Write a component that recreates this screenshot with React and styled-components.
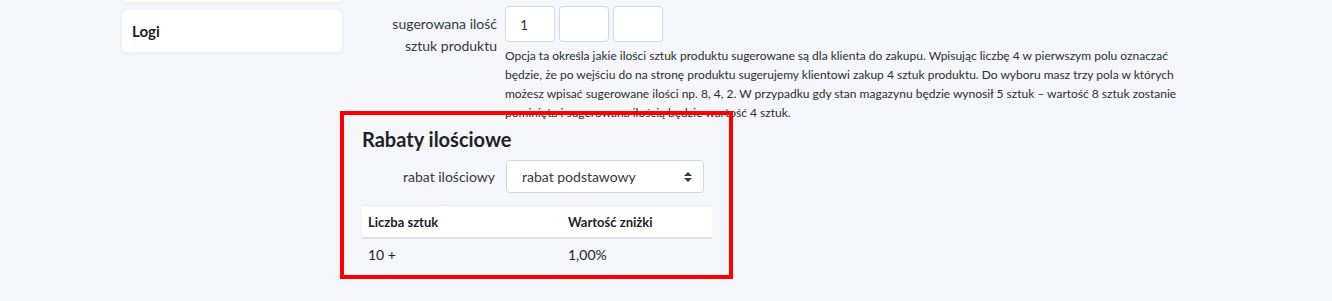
import styled, {createGlobalStyle} from "styled-components";

const GlobalStyle = createGlobalStyle`
    html, body {
        min-height: 100%;
    }
    body {
        margin: 0;
        background: #f4f6f9;
        font-family: "Lato", "Noto Sans", sans-serif;
        color: #212529;
    }
`

export default function App() {
    return (
        <>
            <GlobalStyle />
            <Layout>
                <Sidebar>
                    <Card />
                    <Card>Logi</Card>
                </Sidebar>
                <Main>
                    <FieldRow>
                        <Label>sugerowana ilość<br />sztuk produktu</Label>
                        <div>
                            <Inputs>
                                <SmallInput defaultValue="1" />
                                <SmallInput />
                                <SmallInput />
                            </Inputs>
                            <Hint>
                                Opcja ta określa jakie ilości sztuk produktu sugerowane są dla klienta do zakupu. Wpisując liczbę 4 w pierwszym polu oznaczać
                                będzie, że po wejściu do na stronę produktu sugerujemy klientowi zakup 4 sztuk produktu. Do wyboru masz trzy pola w których
                                możesz wpisać sugerowane ilości np. 8, 4, 2. W przypadku gdy stan magazynu będzie wynosił 5 sztuk – wartość 8 sztuk zostanie
                                pominięta i sugerowana ilością będzie wartość 4 sztuk.
                            </Hint>
                        </div>
                    </FieldRow>
                    <Section>
                        <Heading>Rabaty ilościowe</Heading>
                        <SelectRow>
                            <SelectLabel>rabat ilościowy</SelectLabel>
                            <Select>
                                rabat podstawowy
                                <svg width="10" height="12" viewBox="0 0 10 12">
                                    <path d="M5 1 L9 5 H1 Z M5 11 L9 7 H1 Z" fill="#343a40" />
                                </svg>
                            </Select>
                        </SelectRow>
                        <Table>
                            <colgroup>
                                <col width="200" />
                                <col width="150" />
                            </colgroup>
                            <thead>
                                <tr>
                                    <Th>Liczba sztuk</Th>
                                    <Th>Wartość zniżki</Th>
                                </tr>
                            </thead>
                            <tbody>
                                <tr>
                                    <Td>10 +</Td>
                                    <Td>1,00%</Td>
                                </tr>
                            </tbody>
                        </Table>
                    </Section>
                </Main>
            </Layout>
        </>
    )
}

const Layout = styled.div`
    display: flex;
    align-items: flex-start;
    gap: 20px;
    padding: 0 0 40px 122px;
    min-height: 301px;
    box-sizing: border-box;
`

const Sidebar = styled.div`
    width: 220px;
    display: flex;
    flex-direction: column;
    gap: 8px;
    margin-top: -40px;
`

const Card = styled.div`
    height: 42px;
    box-sizing: border-box;
    padding: 0 10px;
    display: flex;
    align-items: center;
    background: #FFFFFF;
    border-radius: 6px;
    box-shadow: 0 1px 4px rgba(30, 50, 80, 0.06);
    font-size: 15px;
    font-weight: 700;
    color: #1d2226;
`

const Main = styled.div`
    padding-top: 6px;
    width: 860px;
`

const FieldRow = styled.div`
    display: grid;
    grid-template-columns: 135px 1fr;
    column-gap: 8px;
`

const Label = styled.div`
    text-align: right;
    font-size: 14px;
    line-height: 22px;
    padding-top: 7px;
    color: #343a40;
`

const Inputs = styled.div`
    display: flex;
    gap: 4px;
`

const SmallInput = styled.input`
    width: 50px;
    height: 36px;
    box-sizing: border-box;
    border: 1px solid #d3d8dd;
    border-radius: 4px;
    background: #FFFFFF;
    padding: 0 0 0 14px;
    font-family: inherit;
    font-size: 14px;
    color: #343a40;
    outline: none;
`

const Hint = styled.p`
    margin: 4px 0 0;
    max-width: 700px;
    font-size: 12px;
    line-height: 19px;
    color: #2b2f33;
`

const Section = styled.div`
    position: relative;
    width: 350px;
    margin-top: 5px;

    &::after {
        content: "";
        position: absolute;
        top: -16px;
        left: -22px;
        right: -21px;
        bottom: -9px;
        border: 4px solid #ff0000;
        pointer-events: none;
    }
`

const Heading = styled.h2`
    margin: 0 0 9px;
    font-size: 20px;
    line-height: 24px;
    font-weight: 700;
    color: #1d2226;
`

const SelectRow = styled.div`
    display: grid;
    grid-template-columns: 133px 198px;
    column-gap: 11px;
    align-items: center;
`

const SelectLabel = styled.div`
    text-align: right;
    font-size: 14px;
    color: #343a40;
`

const Select = styled.div`
    height: 33px;
    box-sizing: border-box;
    border: 1px solid #d3d8dd;
    border-radius: 4px;
    background: #FFFFFF;
    padding: 0 10px 0 15px;
    display: flex;
    align-items: center;
    justify-content: space-between;
    font-size: 14px;
    color: #343a40;
`

const Table = styled.table`
    margin-top: 12px;
    width: 350px;
    border-collapse: collapse;
    table-layout: fixed;
`

const Th = styled.th`
    height: 31px;
    padding: 0 6px;
    text-align: left;
    font-size: 13px;
    font-weight: 700;
    color: #1d2226;
    background: #FFFFFF;
    border-top: 1px solid #e3e6ea;
    border-bottom: 2px solid #dee2e6;
`

const Td = styled.td`
    height: 31px;
    padding: 0 6px;
    font-size: 14px;
    color: #212529;
`
